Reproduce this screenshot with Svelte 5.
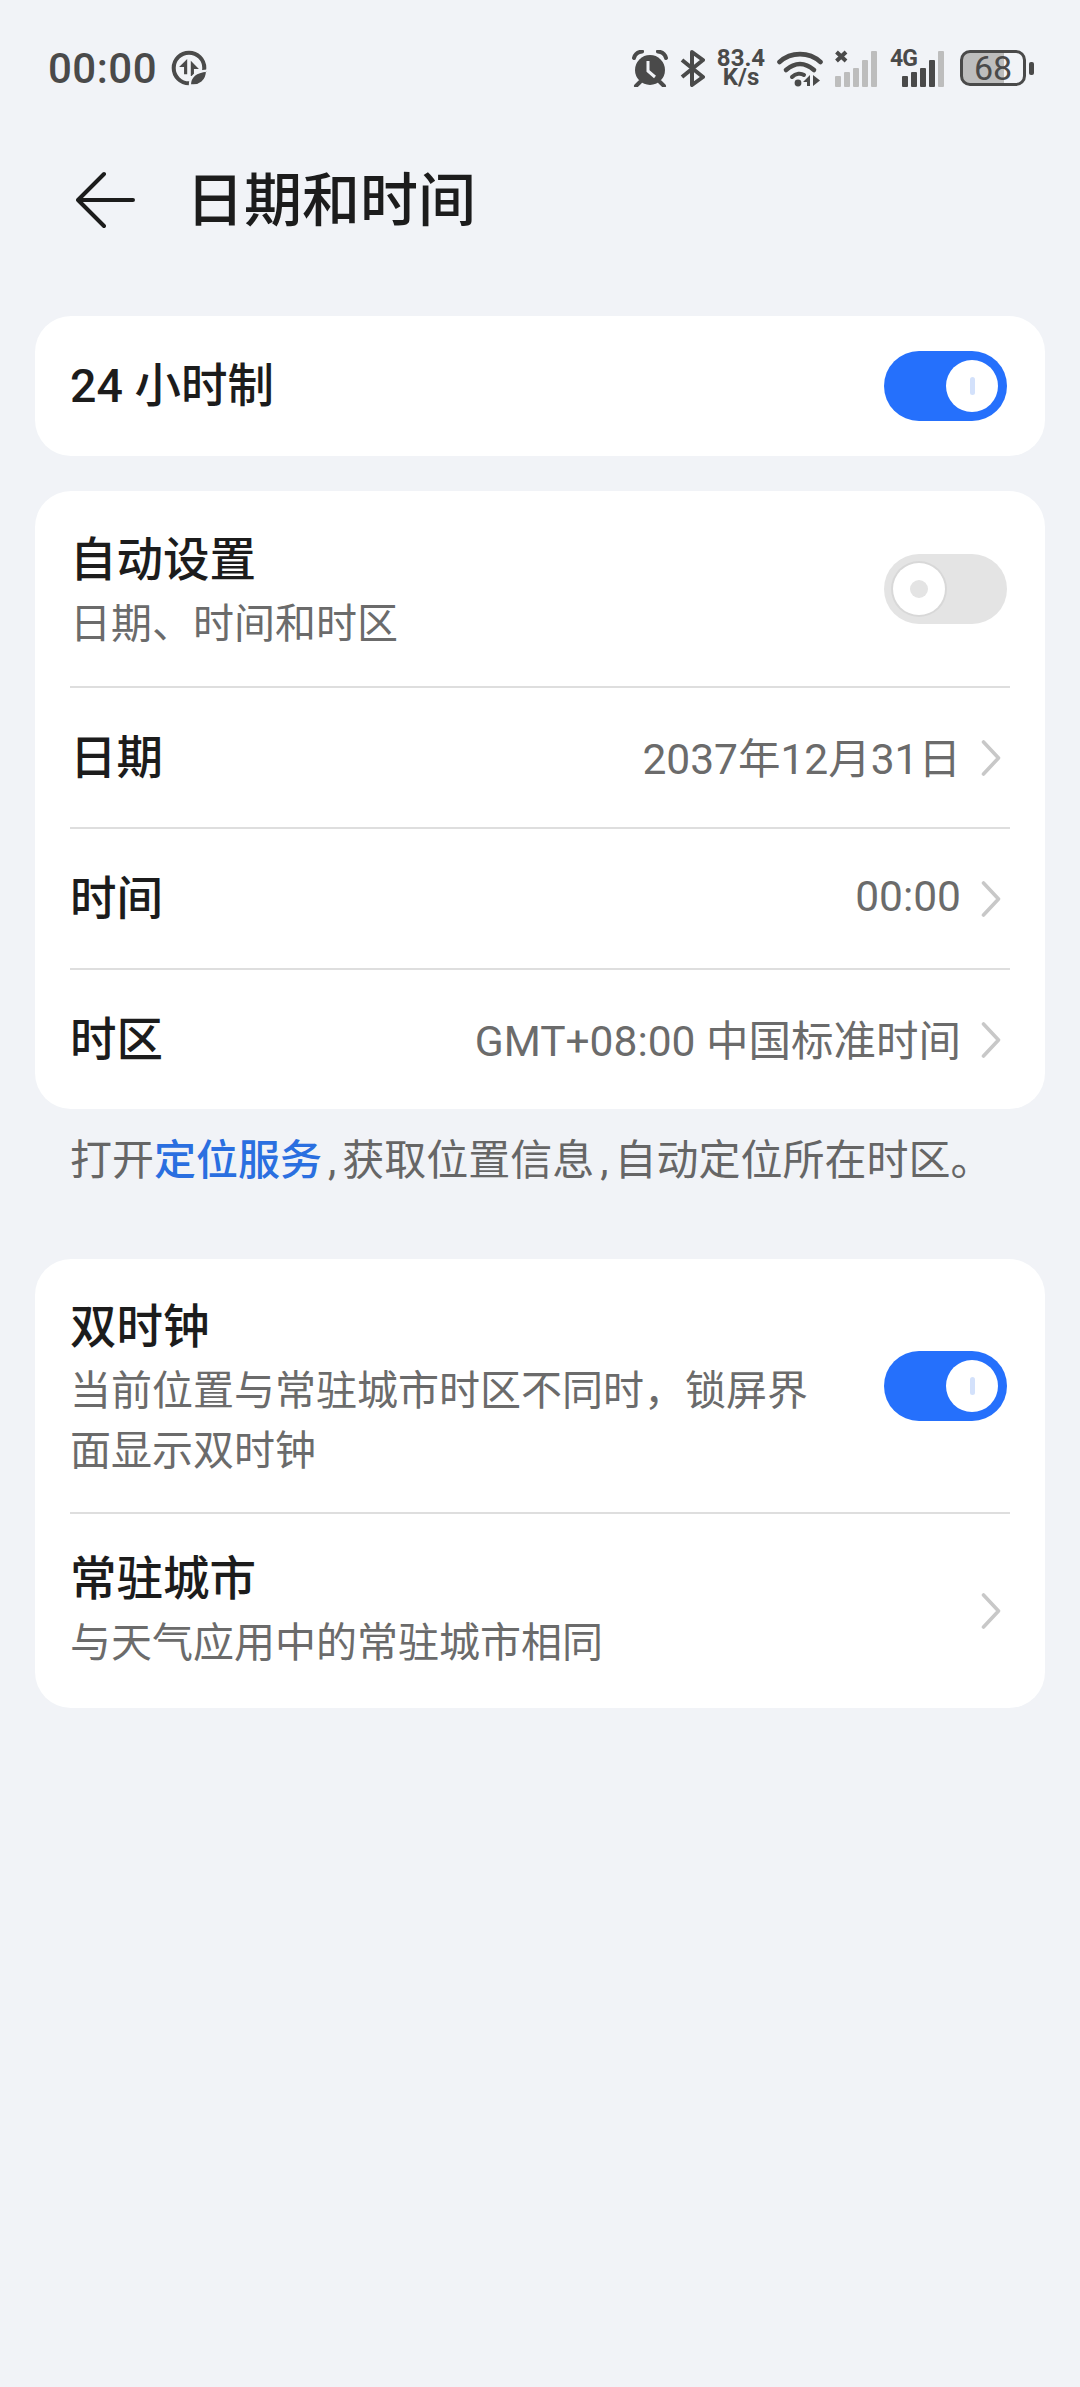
<script>
    let rows = [
        { title: "日期", value: "2037年12月31日" },
        { title: "时间", value: "00:00" },
        { title: "时区", value: "GMT+08:00 中国标准时间" }
    ];
</script>

{#snippet chevron()}
    <svg class="chevron" width="20" height="36" viewBox="0 0 20 36"><path d="M2.5 2 L17.5 18 L2.5 34" fill="none" stroke="#c8c8c8" stroke-width="3.6" stroke-linecap="round" stroke-linejoin="round"/></svg>
{/snippet}

{#snippet toggle(on)}
    <div class="switch" class:on>
        <div class="knob"><span class="mark"></span></div>
    </div>
{/snippet}

<div class="page">
    <!-- STATUS BAR -->
    <div class="status">
        <div class="status-left">
            <span class="clock">00:00</span>
            <svg width="36" height="36" viewBox="0 0 40 40">
                <circle cx="20" cy="20" r="17" fill="none" stroke="#4a4a4a" stroke-width="4.5"/>
                <path d="M18 10 V27 H14.5 V19 L9 19 Z M22 12 V29 H25.5 V21 L31 21 Z" fill="#4a4a4a"/>
                <path d="M21 39 C21 29 29 24 40 23 C40 34 32 41 21 39 Z" fill="#4a4a4a" stroke="#f1f3f7" stroke-width="2.4"/>
            </svg>
        </div>
        <div class="status-right">
            <svg width="36" height="37" viewBox="0 0 36 37">
                <circle cx="18" cy="20" r="15" fill="#4a4a4a"/>
                <path d="M16 11 V21 L23 27" fill="none" stroke="#f1f3f7" stroke-width="3"/>
                <path d="M2 8 C3 4 6 2 10 1.5 M34 8 C33 4 30 2 26 1.5 M8 32 L4 36 M28 32 L32 36" fill="none" stroke="#4a4a4a" stroke-width="4" stroke-linecap="round"/>
            </svg>
            <svg width="25" height="37" viewBox="0 0 25 37">
                <path d="M2 10 L23 27 L12 35 V2 L23 10 L2 27" fill="none" stroke="#4a4a4a" stroke-width="4" stroke-linejoin="round"/>
            </svg>
            <div class="speed"><span>83.4</span><span>K/s</span></div>
            <svg width="46" height="37" viewBox="0 0 46 37">
                <path d="M2.5 12 C14 1.5 32 1.5 43.5 12" fill="none" stroke="#4a4a4a" stroke-width="4.6" stroke-linecap="round"/>
                <path d="M9 20 C18 12 28 12 37 20" fill="none" stroke="#4a4a4a" stroke-width="4.6" stroke-linecap="round"/>
                <path d="M15 27 C19 23 24 23 27 25" fill="none" stroke="#4a4a4a" stroke-width="4" stroke-linecap="round"/>
                <circle cx="21" cy="33" r="3.4" fill="#4a4a4a"/>
                <path d="M33 25 V36 H30 V32 L26 32 Z M36 25 V36 L43 30.5 Z" fill="#4a4a4a"/>
            </svg>
            <svg width="43" height="37" viewBox="0 0 43 37">
                <path d="M1.5 2 L11 11 M11 2 L1.5 11" stroke="#4a4a4a" stroke-width="4"/>
                <g fill="#bdbdbd">
                    <rect x="0" y="26" width="6" height="11" rx="1"/><rect x="9" y="22" width="6" height="15" rx="1"/><rect x="18" y="18" width="6" height="19" rx="1"/><rect x="27" y="10" width="6" height="27" rx="1"/><rect x="36" y="1" width="6" height="36" rx="1"/>
                </g>
            </svg>
            <div class="net">
                <span class="net-label">4G</span>
                <svg width="43" height="37" viewBox="0 0 43 37">
                    <g fill="#4a4a4a">
                        <rect x="0" y="26" width="6" height="11" rx="1"/><rect x="9" y="22" width="6" height="15" rx="1"/><rect x="18" y="18" width="6" height="19" rx="1"/><rect x="27" y="10" width="6" height="27" rx="1"/>
                    </g>
                    <rect x="36" y="1" width="6" height="36" rx="1" fill="#bdbdbd"/>
                </svg>
            </div>
            <div class="battery">
                <div class="cell"><span>68</span></div>
                <div class="tip"></div>
            </div>
        </div>
    </div>

    <!-- HEADER -->
    <div class="header">
        <svg width="60" height="60" viewBox="0 0 60 60">
            <path d="M28 3 L2 29 L28 55 M2 29 H57" fill="none" stroke="#1c1c1c" stroke-width="4" stroke-linecap="round" stroke-linejoin="round"/>
        </svg>
        <h1>日期和时间</h1>
    </div>

    <!-- SETTINGS -->
    <div class="card single">
        <span class="title">24 小时制</span>
        {@render toggle(true)}
    </div>

    <div class="card">
        <div class="row auto">
            <div class="text">
                <span class="title">自动设置</span>
                <span class="sub">日期、时间和时区</span>
            </div>
            {@render toggle(false)}
        </div>
        {#each rows as r}
            <div class="row value-row">
                <span class="title">{r.title}</span>
                <div class="value">
                    <span>{r.value}</span>
                    {@render chevron()}
                </div>
            </div>
        {/each}
    </div>

    <p class="note">打开<b>定位服务</b><i>,</i>获取位置信息<i>,</i>自动定位所在时区。</p>

    <div class="card">
        <div class="row dual">
            <div class="text">
                <span class="title">双时钟</span>
                <span class="sub">当前位置与常驻城市时区不同时，锁屏界面显示双时钟</span>
            </div>
            {@render toggle(true)}
        </div>
        <div class="row city">
            <div class="text">
                <span class="title">常驻城市</span>
                <span class="sub">与天气应用中的常驻城市相同</span>
            </div>
            {@render chevron()}
        </div>
    </div>
</div>

<style>
    :global(body) {
        margin: 0;
        background: #f1f3f7;
    }

    .page {
        height: 2387px;
        box-sizing: border-box;
        padding: 0 35px;
        background: #f1f3f7;
        font-family: Roboto, "Noto Sans CJK SC", sans-serif;
        color: #1c1c1c;
        overflow: hidden;
    }

    .status {
        height: 140px;
        display: flex;
        justify-content: space-between;
        align-items: center;
        padding: 0 11px 4px 13px;
        box-sizing: border-box;
        color: #4a4a4a;
    }

    .status-left, .status-right {
        display: flex;
        align-items: center;
    }

    .status-left {
        gap: 14px;
    }

    .status-right {
        gap: 12px;
    }

    .clock {
        font-size: 42px;
        font-weight: 500;
        letter-spacing: 0.5px;
    }

    .speed {
        width: 48px;
        display: flex;
        flex-direction: column;
        align-items: center;
        font-size: 24px;
        font-weight: 700;
        line-height: 19px;
    }

    .net {
        position: relative;
        display: flex;
        padding-left: 12px;
    }

    .net-label {
        position: absolute;
        left: 0;
        top: -5px;
        font-size: 23px;
        font-weight: 700;
        letter-spacing: -1px;
    }

    .battery {
        display: flex;
        align-items: center;
        gap: 3px;
        margin-left: 3px;
    }

    .cell {
        width: 60px;
        height: 30px;
        border: 3px solid #4a4a4a;
        border-radius: 10px;
        background: linear-gradient(90deg, #bdbdbd 68%, transparent 68%);
        display: flex;
        align-items: center;
        justify-content: center;
        font-size: 34px;
        line-height: 30px;
    }

    .tip {
        width: 5px;
        height: 13px;
        border-radius: 2px;
        background: #4a4a4a;
    }

    .header {
        height: 176px;
        box-sizing: border-box;
        padding: 0 0 54px 41px;
        display: flex;
        align-items: center;
        gap: 50px;
    }

    h1 {
        margin: 0 0 11px;
        font-size: 58px;
        font-weight: 500;
    }

    .card {
        background: #fff;
        border-radius: 36px;
        margin-bottom: 35px;
        padding: 0 35px;
    }

    .card.single {
        height: 140px;
        display: flex;
        align-items: center;
        justify-content: space-between;
    }

    .row {
        display: flex;
        align-items: center;
        justify-content: space-between;
        border-top: 2px solid #dedede;
        box-sizing: border-box;
    }

    .row:first-child {
        border-top: none;
    }

    .row.auto {
        height: 195px;
    }

    .value-row {
        height: 141px;
    }

    .row.dual {
        height: 253px;
    }

    .row.city {
        height: 196px;
    }

    .text {
        display: flex;
        flex-direction: column;
        gap: 5px;
    }

    .auto .text, .dual .text {
        padding-top: 8px;
    }

    .dual .sub {
        width: 750px;
    }

    .title {
        font-size: 46.5px;
        font-weight: 500;
        line-height: 58px;
    }

    .sub {
        font-size: 41px;
        line-height: 60px;
        color: #6b6b6b;
    }

    .value {
        display: flex;
        align-items: center;
        gap: 20px;
        font-size: 42.5px;
        color: #6b6b6b;
    }

    .value span {
        margin-bottom: 4px;
    }

    .chevron {
        display: block;
        margin-right: 9px;
        flex-shrink: 0;
    }

    .note {
        margin: -28px 0 53px;
        padding-left: 35px;
        height: 90px;
        line-height: 90px;
        font-size: 42px;
        color: #666;
    }

    .note b {
        color: #2a6fe0;
        font-weight: 500;
    }

    .note i {
        font-style: normal;
        margin: 0 6px;
    }

    .switch {
        width: 123px;
        height: 70px;
        border-radius: 35px;
        background: #e4e4e4;
        display: flex;
        align-items: center;
        padding: 0 9px;
        box-sizing: border-box;
        flex-shrink: 0;
        margin-right: 3px;
    }

    .switch.on {
        background: #2570fc;
        justify-content: flex-end;
    }

    .knob {
        width: 52px;
        height: 52px;
        border-radius: 50%;
        background: #fff;
        display: flex;
        align-items: center;
        justify-content: center;
        box-shadow: 0 0 0 2px #d8d8d8;
    }

    .on .knob {
        box-shadow: none;
    }

    .mark {
        width: 18px;
        height: 18px;
        border-radius: 50%;
        background: #e4e4e4;
    }

    .on .mark {
        width: 5px;
        height: 18px;
        border-radius: 3px;
        background: #d3e1fb;
    }
</style>
